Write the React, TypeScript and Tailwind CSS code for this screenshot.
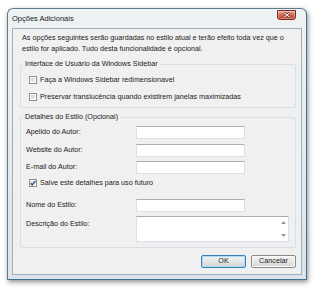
import React from "react";

// Caixa de seleção estilo Vista
const CheckBox = ({ checked = false }: { checked?: boolean }) => (
  <span className="relative flex h-[8px] w-[8px] shrink-0 items-center justify-center border border-[#8f8f8f] bg-white">
    <span className="h-[4px] w-[4px] bg-gradient-to-br from-[#c9ced4] to-[#f4f5f6]" />
    {checked && (
      <svg viewBox="0 0 8 8" className="absolute -left-[1px] -top-[1px] h-[8px] w-[8px]">
        <path d="M1.6 4.2 L3.2 5.9 L6.6 1.8" fill="none" stroke="#2a4a86" strokeWidth="1.3" />
      </svg>
    )}
  </span>
);

const TextBox = ({ w = "w-[109px]" }: { w?: string }) => (
  <div className={`h-[13px] ${w} border border-[#dbdfe6] border-t-[#abadb3] bg-white`} />
);

const FieldRow = ({ label, mt }: { label: string; mt: string }) => (
  <div className={`flex items-center pl-[5px] ${mt}`}>
    <span className="w-[110px] whitespace-nowrap">{label}</span>
    <TextBox />
  </div>
);

const Button = ({ label, focused = false }: { label: string; focused?: boolean }) => (
  <div
    className={`flex h-[13px] w-[45px] items-center justify-center rounded-[2px] border bg-gradient-to-b from-[#f3f3f3] via-[#e6e6e6] to-[#d3d3d3] ${
      focused ? "border-[#3c7fb1] shadow-[inset_0_0_0_1px_#a9dcf6]" : "border-[#8a8a8a] shadow-[inset_0_0_0_1px_#fbfbfb]"
    }`}
  >
    {label}
  </div>
);

export default function App() {
  return (
    <div className="h-[288px] w-[320px] bg-white pl-[7px] pt-[8px] font-['Liberation_Sans',Arial,sans-serif] text-[7.2px] text-[#1b1b1b]">
      <div className="relative flex h-[272px] w-[300px] flex-col rounded-t-[6px] border border-[#62798a] border-b-[#3f7088] border-r-[#4c6f82] bg-gradient-to-b from-[#eef2f5] to-[#dbe4ea] px-[4px] pb-[4px] shadow-[1px_2px_5px_rgba(0,0,0,0.45)]">
        {/* barra de título */}
        <div className="flex h-[19px] shrink-0 items-center">
          <span className="text-[7.5px] text-[#202020]">Opções Adicionais</span>
        </div>
        <div className="absolute right-[10px] top-[1px] flex h-[10px] w-[19px] items-center justify-center rounded-b-[3px] border border-[#7a2a1c] bg-gradient-to-b from-[#e8a999] via-[#d4654c] to-[#c0432a] shadow-[inset_0_0_0_1px_rgba(255,255,255,0.35)]">
          <svg viewBox="0 0 8 6" className="h-[6px] w-[8px]">
            <path d="M1.5 0.8 L6.5 5.2 M6.5 0.8 L1.5 5.2" stroke="#5a1a10" strokeWidth="2.2" />
            <path d="M1.5 0.8 L6.5 5.2 M6.5 0.8 L1.5 5.2" stroke="#ffffff" strokeWidth="1.1" />
          </svg>
        </div>

        {/* área do cliente */}
        <div className="flex flex-1 flex-col border border-[#9fb0bb] bg-[#f0f0f0]">
          <p className="whitespace-nowrap pl-[9px] pt-[3px] leading-[11px]">
            As opções seguintes serão guardadas no estilo atual e terão efeito toda vez que o
            <br />
            estilo for aplicado. Tudo desta funcionalidade é opcional.
          </p>

          <fieldset className="ml-[7px] mt-[5px] w-[276px] rounded-[2px] border border-[#d5dfe5] pb-[5px] pl-[8px]">
            <legend className="-ml-[6px] px-[2px] leading-[10px]">Interface de Usuário da Windows Sidebar</legend>
            <div className="mt-[6px] flex h-[10px] items-center gap-[3px]">
              <CheckBox />
              <span>Faça a Windows Sidebar redimensionavel</span>
            </div>
            <div className="mt-[7px] flex h-[10px] items-center gap-[3px]">
              <CheckBox />
              <span>Preservar translucência quando existirem janelas maximizadas</span>
            </div>
          </fieldset>

          <fieldset className="ml-[7px] mt-[4px] w-[276px] rounded-[2px] border border-[#d5dfe5] pb-[5px]">
            <legend className="ml-[2px] px-[2px] leading-[10px]">Detalhes do Estilo (Opcional)</legend>
            <FieldRow label="Apelido do Autor:" mt="mt-[4px]" />
            <FieldRow label="Website do Autor:" mt="mt-[5px]" />
            <FieldRow label="E-mail do Autor:" mt="mt-[4px]" />
            <div className="ml-[8px] mt-[4px] flex h-[10px] items-center gap-[3px]">
              <CheckBox checked />
              <span>Salve este detalhes para uso futuro</span>
            </div>
            <FieldRow label="Nome do Estilo:" mt="mt-[11px]" />
            <div className="mt-[4px] flex items-start pl-[5px]">
              <span className="w-[110px] whitespace-nowrap pt-[3px]">Descrição do Estilo:</span>
              <div className="flex h-[26px] w-[153px] border border-[#dbdfe6] border-t-[#abadb3] bg-white">
                <div className="flex-1" />
                <div className="flex w-[9px] flex-col items-center justify-between py-[4px]">
                  <svg viewBox="0 0 5 3" className="h-[3px] w-[5px]">
                    <path d="M0 3 L2.5 0 L5 3 Z" fill="#9a9a9a" />
                  </svg>
                  <svg viewBox="0 0 5 3" className="h-[3px] w-[5px]">
                    <path d="M0 0 L2.5 3 L5 0 Z" fill="#9a9a9a" />
                  </svg>
                </div>
              </div>
            </div>
          </fieldset>

          <div className="ml-[7px] mt-[7px] flex w-[276px] justify-end gap-[5px]">
            <Button label="OK" focused />
            <Button label="Cancelar" />
          </div>
        </div>
      </div>
    </div>
  );
}
